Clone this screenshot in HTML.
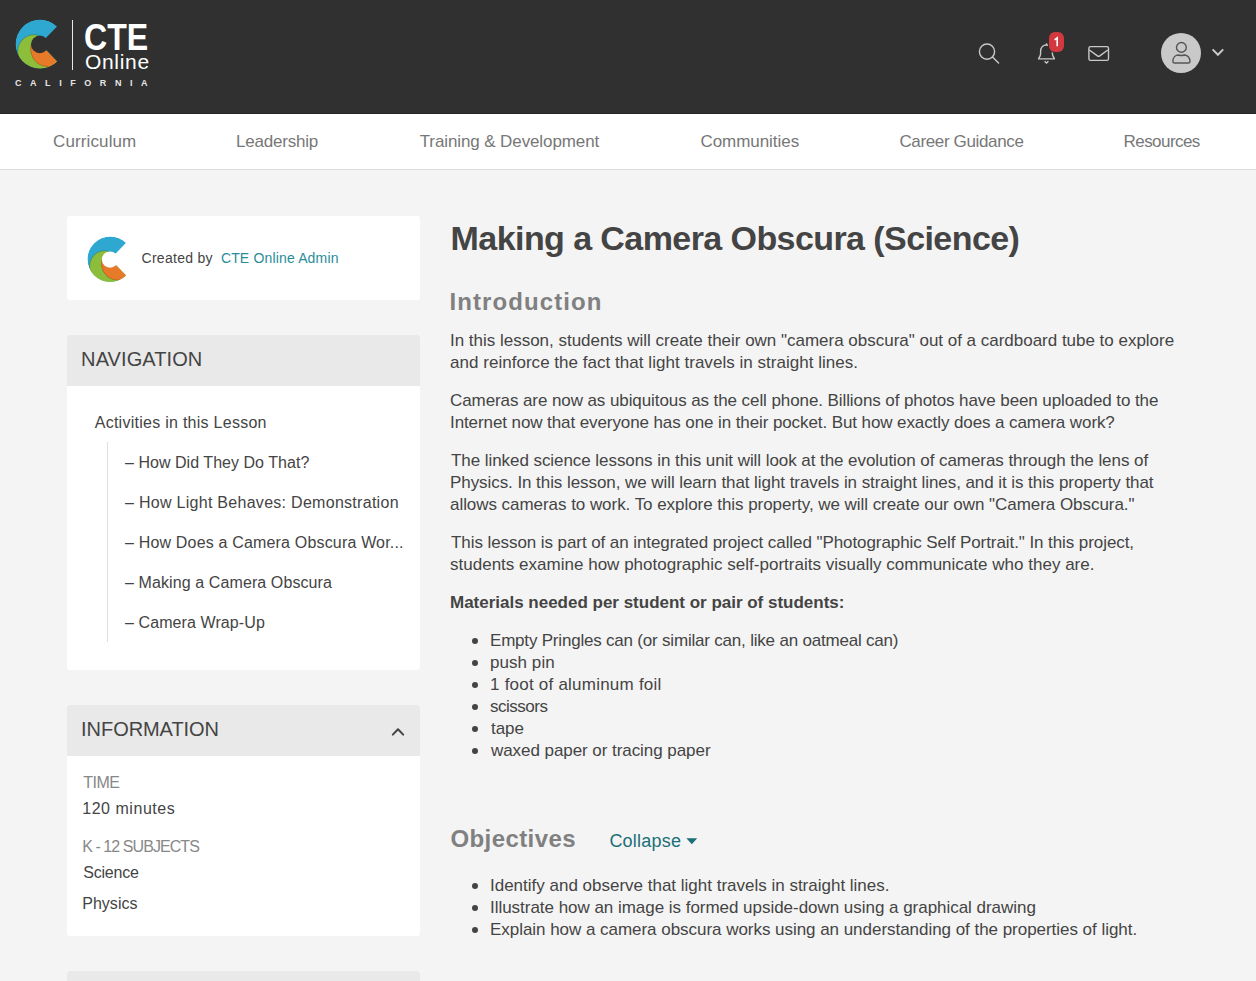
<!DOCTYPE html>
<html><head><meta charset="utf-8"><style>
*{margin:0;padding:0;box-sizing:border-box}
html,body{width:1256px;height:981px;overflow:hidden;background:#f4f4f4;font-family:"Liberation Sans", sans-serif}
.abs{position:absolute}
.t{position:absolute;white-space:nowrap}
.card{position:absolute;left:67px;width:353px;background:#fff;border-radius:3px;overflow:hidden}
.ch{position:absolute;left:0;top:0;width:353px;background:#e9e9e9}
.dot{position:absolute;width:6.4px;height:6.4px;border-radius:50%;background:#444}
</style></head><body>
<div class="abs" style="left:0;top:0;width:1256px;height:114px;background:#303030"></div>
<div class="abs" style="left:0;top:113px;width:1256px;height:1px;background:#262626"></div>
<div class="abs" style="left:0;top:114px;width:1256px;height:55px;background:#fff"></div>
<div class="abs" style="left:0;top:169px;width:1256px;height:1px;background:#dcdcdc"></div>
<svg class="abs" style="left:15.00px;top:19.40px" width="50.00" height="50.00" viewBox="0 0 50 50">
<defs><clipPath id="c40"><path d="M25 25 L42.02 7.38 A24.5 24.5 0 1 0 42.02 42.62 Z"/></clipPath></defs>
<g clip-path="url(#c40)">
<circle cx="25" cy="25" r="24.5" fill="#2ea8d0"/>
<path d="M22.17 16.05 A16.50 16.50 0 0 0 3.80 37.94 L-10 45 L-10 60 L60 60 L60 30 L24.8 25.4 Z" fill="#8cbe3c" stroke="rgba(20,40,20,0.35)" stroke-width="0.7"/>
<path d="M16.11 25.29 A17.80 17.80 0 0 0 50.03 35.99 L24.8 25.4 Z" fill="#e77a28" stroke="rgba(60,30,10,0.35)" stroke-width="0.7"/>
</g><circle cx="24.8" cy="25.4" r="8.8" fill="#303030"/></svg>
<div class="abs" style="left:71.7px;top:20px;width:1.5px;height:50px;background:#e8e8e8"></div>
<svg class="abs" style="left:0;top:0" width="1256" height="114" fill="none" stroke="#c8c8c8" stroke-width="1.4">
<circle cx="987" cy="51.6" r="7.6"/>
<line x1="992.5" y1="57" x2="998.6" y2="63" stroke-linecap="round"/>
<path d="M1038.6 58.9 C1038.6 57.6 1040.6 56.6 1040.6 53.6 L1040.6 51.6 C1040.6 47.6 1043 45 1046.5 45 C1050 45 1052.4 47.6 1052.4 51.6 L1052.4 53.6 C1052.4 56.6 1054.4 57.6 1054.4 58.9 Z" stroke-linejoin="round"/>
<line x1="1046.5" y1="43.3" x2="1046.5" y2="45"/>
<path d="M1044.6 61.2 L1046.5 63 L1048.4 61.2"/>
<rect x="1088.9" y="46.6" width="19.6" height="13.8" rx="1.6"/>
<path d="M1089.4 50.0 L1097.4 55.9 Q1098.6 56.7 1099.8 55.9 L1107.8 50.0"/>
<path d="M1212.6 49.4 L1217.9 54.8 L1223.2 49.4" stroke-width="2"/>
</svg>
<div class="abs" style="left:1049.2px;top:31.8px;width:14.8px;height:20.3px;border-radius:6px;background:#d1393e;box-shadow:0 0 0 1px #303030"></div>
<svg class="abs" style="left:0;top:0" width="1256" height="114"><path d="M1054.6 39.8 L1057.2 37.8 L1057.2 46.2" fill="none" stroke="#fff" stroke-width="1.6" stroke-linejoin="miter"/></svg>
<div class="abs" style="left:1161px;top:32.9px;width:40px;height:40px;border-radius:50%;background:#c9c9c9"></div>
<svg class="abs" style="left:1161px;top:32.9px" width="40" height="40" fill="none" stroke="#555" stroke-width="1.4">
<circle cx="20.4" cy="14.4" r="4.9"/>
<path d="M11.9 28.6 C11.9 24.4 14.5 22.0 17.4 22.0 Q20.4 23.0 23.4 22.0 C26.3 22.0 29.0 24.4 29.0 28.6 C29.0 29.6 28.6 30.0 27.8 30.0 L13.1 30.0 C12.3 30.0 11.9 29.6 11.9 28.6 Z" stroke-linejoin="round"/>
</svg>

<div class="card" style="top:216px;height:84px"></div>
<svg class="abs" style="left:87.14px;top:235.54px" width="46.43" height="46.43" viewBox="0 0 50 50">
<defs><clipPath id="c110"><path d="M25 25 L42.02 7.38 A24.5 24.5 0 1 0 42.02 42.62 Z"/></clipPath></defs>
<g clip-path="url(#c110)">
<circle cx="25" cy="25" r="24.5" fill="#2ea8d0"/>
<path d="M22.17 16.05 A16.50 16.50 0 0 0 3.80 37.94 L-10 45 L-10 60 L60 60 L60 30 L24.8 25.4 Z" fill="#8cbe3c" stroke="rgba(20,40,20,0.35)" stroke-width="0.7"/>
<path d="M16.11 25.29 A17.80 17.80 0 0 0 50.03 35.99 L24.8 25.4 Z" fill="#e77a28" stroke="rgba(60,30,10,0.35)" stroke-width="0.7"/>
</g><circle cx="24.8" cy="25.4" r="8.8" fill="#fff"/></svg>

<div class="card" style="top:335px;height:334.5px"><div class="ch" style="height:50.6px"></div>
<div class="abs" style="left:40.2px;top:107px;width:1px;height:200px;background:#dedede"></div></div>

<div class="card" style="top:705.3px;height:230.9px"><div class="ch" style="height:50.6px"></div></div>
<svg class="abs" style="left:0;top:0" width="1256" height="981" fill="none" stroke="#444" stroke-width="2" stroke-linecap="round" stroke-linejoin="round">
<path d="M392.8 734.6 L398 729.2 L403.2 734.6"/>
</svg>
<div class="card" style="top:971px;height:40px"><div class="ch" style="height:50px"></div></div>

<div class="dot" style="left:471.8px;top:638.0px"></div><div class="dot" style="left:471.8px;top:659.9px"></div><div class="dot" style="left:471.8px;top:681.9px"></div><div class="dot" style="left:471.8px;top:703.9px"></div><div class="dot" style="left:471.8px;top:725.9px"></div><div class="dot" style="left:471.8px;top:747.9px"></div>
<div class="dot" style="left:471.8px;top:882.9px"></div><div class="dot" style="left:471.8px;top:904.9px"></div><div class="dot" style="left:471.8px;top:926.9px"></div>
<svg class="abs" style="left:686px;top:837.6px" width="12" height="7"><path d="M0.4 0.3 L11.2 0.3 L5.8 6.2 Z" fill="#1b6f78"/></svg>
<div id="nav0" class="t" style="left:53.10px;top:132.41px;font-size:17px;line-height:20px;font-weight:400;color:#777;letter-spacing:0.111px;">Curriculum</div>
<div id="nav1" class="t" style="left:236.00px;top:132.41px;font-size:17px;line-height:20px;font-weight:400;color:#777;letter-spacing:-0.200px;">Leadership</div>
<div id="nav2" class="t" style="left:419.70px;top:132.41px;font-size:17px;line-height:20px;font-weight:400;color:#777;letter-spacing:-0.105px;">Training &amp; Development</div>
<div id="nav3" class="t" style="left:700.40px;top:132.41px;font-size:17px;line-height:20px;font-weight:400;color:#777;letter-spacing:-0.040px;">Communities</div>
<div id="nav4" class="t" style="left:899.40px;top:132.41px;font-size:17px;line-height:20px;font-weight:400;color:#777;letter-spacing:-0.357px;">Career Guidance</div>
<div id="nav5" class="t" style="left:1123.50px;top:132.41px;font-size:17px;line-height:20px;font-weight:400;color:#777;letter-spacing:-0.550px;">Resources</div>
<div id="cte" class="t" style="left:84.00px;top:15.68px;font-size:37px;line-height:44px;font-weight:700;color:#fff;letter-spacing:0.000px;transform:scaleX(0.8676);transform-origin:0 0;">CTE</div>
<div id="online" class="t" style="left:85.00px;top:48.62px;font-size:21px;line-height:25px;font-weight:400;color:#fff;letter-spacing:0.680px;">Online</div>
<div id="calif" class="t" style="left:15.00px;top:78.48px;font-size:9px;line-height:11px;font-weight:700;color:#e6e6e6;letter-spacing:8.556px;">CALIFORNIA</div>
<div id="created" class="t" style="left:141.50px;top:250.25px;font-size:14px;line-height:17px;font-weight:400;color:#444;letter-spacing:0.289px;">Created by</div>
<div id="admin" class="t" style="left:220.90px;top:250.25px;font-size:14px;line-height:17px;font-weight:400;color:#2a8c99;letter-spacing:0.160px;">CTE Online Admin</div>
<div id="navh" class="t" style="left:81.10px;top:347.07px;font-size:20px;line-height:24px;font-weight:400;color:#444;letter-spacing:0.089px;">NAVIGATION</div>
<div id="act" class="t" style="left:94.70px;top:412.56px;font-size:16px;line-height:19px;font-weight:400;color:#444;letter-spacing:0.267px;">Activities in this Lesson</div>
<div id="ni0" class="t" style="left:125.00px;top:452.96px;font-size:16px;line-height:19px;font-weight:400;color:#444;letter-spacing:0.037px;">– How Did They Do That?</div>
<div id="ni1" class="t" style="left:125.00px;top:492.96px;font-size:16px;line-height:19px;font-weight:400;color:#444;letter-spacing:0.285px;">– How Light Behaves: Demonstration</div>
<div id="ni2" class="t" style="left:125.00px;top:532.96px;font-size:16px;line-height:19px;font-weight:400;color:#444;letter-spacing:0.176px;">– How Does a Camera Obscura Wor...</div>
<div id="ni3" class="t" style="left:125.00px;top:572.96px;font-size:16px;line-height:19px;font-weight:400;color:#444;letter-spacing:0.100px;">– Making a Camera Obscura</div>
<div id="ni4" class="t" style="left:125.00px;top:613.26px;font-size:16px;line-height:19px;font-weight:400;color:#444;letter-spacing:0.093px;">– Camera Wrap-Up</div>
<div id="infoh" class="t" style="left:81.10px;top:716.87px;font-size:20px;line-height:24px;font-weight:400;color:#444;letter-spacing:-0.060px;">INFORMATION</div>
<div id="time" class="t" style="left:83.20px;top:772.86px;font-size:16px;line-height:19px;font-weight:400;color:#888;letter-spacing:-0.467px;">TIME</div>
<div id="mins" class="t" style="left:82.20px;top:799.06px;font-size:16px;line-height:19px;font-weight:400;color:#444;letter-spacing:0.540px;">120 minutes</div>
<div id="k12" class="t" style="left:82.20px;top:836.66px;font-size:16px;line-height:19px;font-weight:400;color:#888;letter-spacing:-0.929px;">K - 12 SUBJECTS</div>
<div id="sci" class="t" style="left:83.20px;top:862.76px;font-size:16px;line-height:19px;font-weight:400;color:#444;letter-spacing:-0.200px;">Science</div>
<div id="phy" class="t" style="left:82.20px;top:893.96px;font-size:16px;line-height:19px;font-weight:400;color:#444;letter-spacing:0.034px;">Physics</div>
<div id="title" class="t" style="left:450.60px;top:217.82px;font-size:34px;line-height:41px;font-weight:700;color:#444;letter-spacing:-0.575px;">Making a Camera Obscura (Science)</div>
<div id="intro" class="t" style="left:449.50px;top:287.18px;font-size:24px;line-height:29px;font-weight:700;color:#808080;letter-spacing:1.091px;">Introduction</div>
<div id="p0" class="t" style="left:450.00px;top:331.21px;font-size:17px;line-height:20px;font-weight:400;color:#444;letter-spacing:-0.014px;">In this lesson, students will create their own &quot;camera obscura&quot; out of a cardboard tube to explore</div>
<div id="p1" class="t" style="left:450.00px;top:353.11px;font-size:17px;line-height:20px;font-weight:400;color:#444;letter-spacing:0.030px;">and reinforce the fact that light travels in straight lines.</div>
<div id="p2" class="t" style="left:450.00px;top:391.11px;font-size:17px;line-height:20px;font-weight:400;color:#444;letter-spacing:-0.087px;">Cameras are now as ubiquitous as the cell phone. Billions of photos have been uploaded to the</div>
<div id="p3" class="t" style="left:450.00px;top:413.11px;font-size:17px;line-height:20px;font-weight:400;color:#444;letter-spacing:-0.093px;">Internet now that everyone has one in their pocket. But how exactly does a camera work?</div>
<div id="p4" class="t" style="left:451.00px;top:451.11px;font-size:17px;line-height:20px;font-weight:400;color:#444;letter-spacing:-0.062px;">The linked science lessons in this unit will look at the evolution of cameras through the lens of</div>
<div id="p5" class="t" style="left:450.00px;top:473.11px;font-size:17px;line-height:20px;font-weight:400;color:#444;letter-spacing:-0.067px;">Physics. In this lesson, we will learn that light travels in straight lines, and it is this property that</div>
<div id="p6" class="t" style="left:450.00px;top:495.11px;font-size:17px;line-height:20px;font-weight:400;color:#444;letter-spacing:-0.049px;">allows cameras to work. To explore this property, we will create our own &quot;Camera Obscura.&quot;</div>
<div id="p7" class="t" style="left:451.00px;top:533.11px;font-size:17px;line-height:20px;font-weight:400;color:#444;letter-spacing:-0.077px;">This lesson is part of an integrated project called &quot;Photographic Self Portrait.&quot; In this project,</div>
<div id="p8" class="t" style="left:450.00px;top:555.11px;font-size:17px;line-height:20px;font-weight:400;color:#444;letter-spacing:0.012px;">students examine how photographic self-portraits visually communicate who they are.</div>
<div id="mat" class="t" style="left:450.00px;top:593.11px;font-size:17px;line-height:20px;font-weight:700;color:#444;letter-spacing:-0.009px;">Materials needed per student or pair of students:</div>
<div id="b0" class="t" style="left:490.00px;top:631.21px;font-size:17px;line-height:20px;font-weight:400;color:#444;letter-spacing:-0.200px;">Empty Pringles can (or similar can, like an oatmeal can)</div>
<div id="b1" class="t" style="left:490.00px;top:653.11px;font-size:17px;line-height:20px;font-weight:400;color:#444;letter-spacing:0.057px;">push pin</div>
<div id="b2" class="t" style="left:490.00px;top:675.11px;font-size:17px;line-height:20px;font-weight:400;color:#444;letter-spacing:0.227px;">1 foot of aluminum foil</div>
<div id="b3" class="t" style="left:490.00px;top:697.11px;font-size:17px;line-height:20px;font-weight:400;color:#444;letter-spacing:-0.486px;">scissors</div>
<div id="b4" class="t" style="left:491.00px;top:719.11px;font-size:17px;line-height:20px;font-weight:400;color:#444;letter-spacing:-0.067px;">tape</div>
<div id="b5" class="t" style="left:491.00px;top:741.11px;font-size:17px;line-height:20px;font-weight:400;color:#444;letter-spacing:-0.059px;">waxed paper or tracing paper</div>
<div id="obj" class="t" style="left:450.40px;top:824.28px;font-size:24px;line-height:29px;font-weight:700;color:#808080;letter-spacing:0.422px;">Objectives</div>
<div id="coll" class="t" style="left:609.40px;top:829.86px;font-size:18px;line-height:22px;font-weight:400;color:#1b6f78;letter-spacing:0.228px;">Collapse</div>
<div id="o0" class="t" style="left:490.00px;top:876.11px;font-size:17px;line-height:20px;font-weight:400;color:#444;letter-spacing:-0.004px;">Identify and observe that light travels in straight lines.</div>
<div id="o1" class="t" style="left:490.00px;top:898.11px;font-size:17px;line-height:20px;font-weight:400;color:#444;letter-spacing:-0.031px;">Illustrate how an image is formed upside-down using a graphical drawing</div>
<div id="o2" class="t" style="left:490.00px;top:920.11px;font-size:17px;line-height:20px;font-weight:400;color:#444;letter-spacing:-0.036px;">Explain how a camera obscura works using an understanding of the properties of light.</div>
</body></html>
